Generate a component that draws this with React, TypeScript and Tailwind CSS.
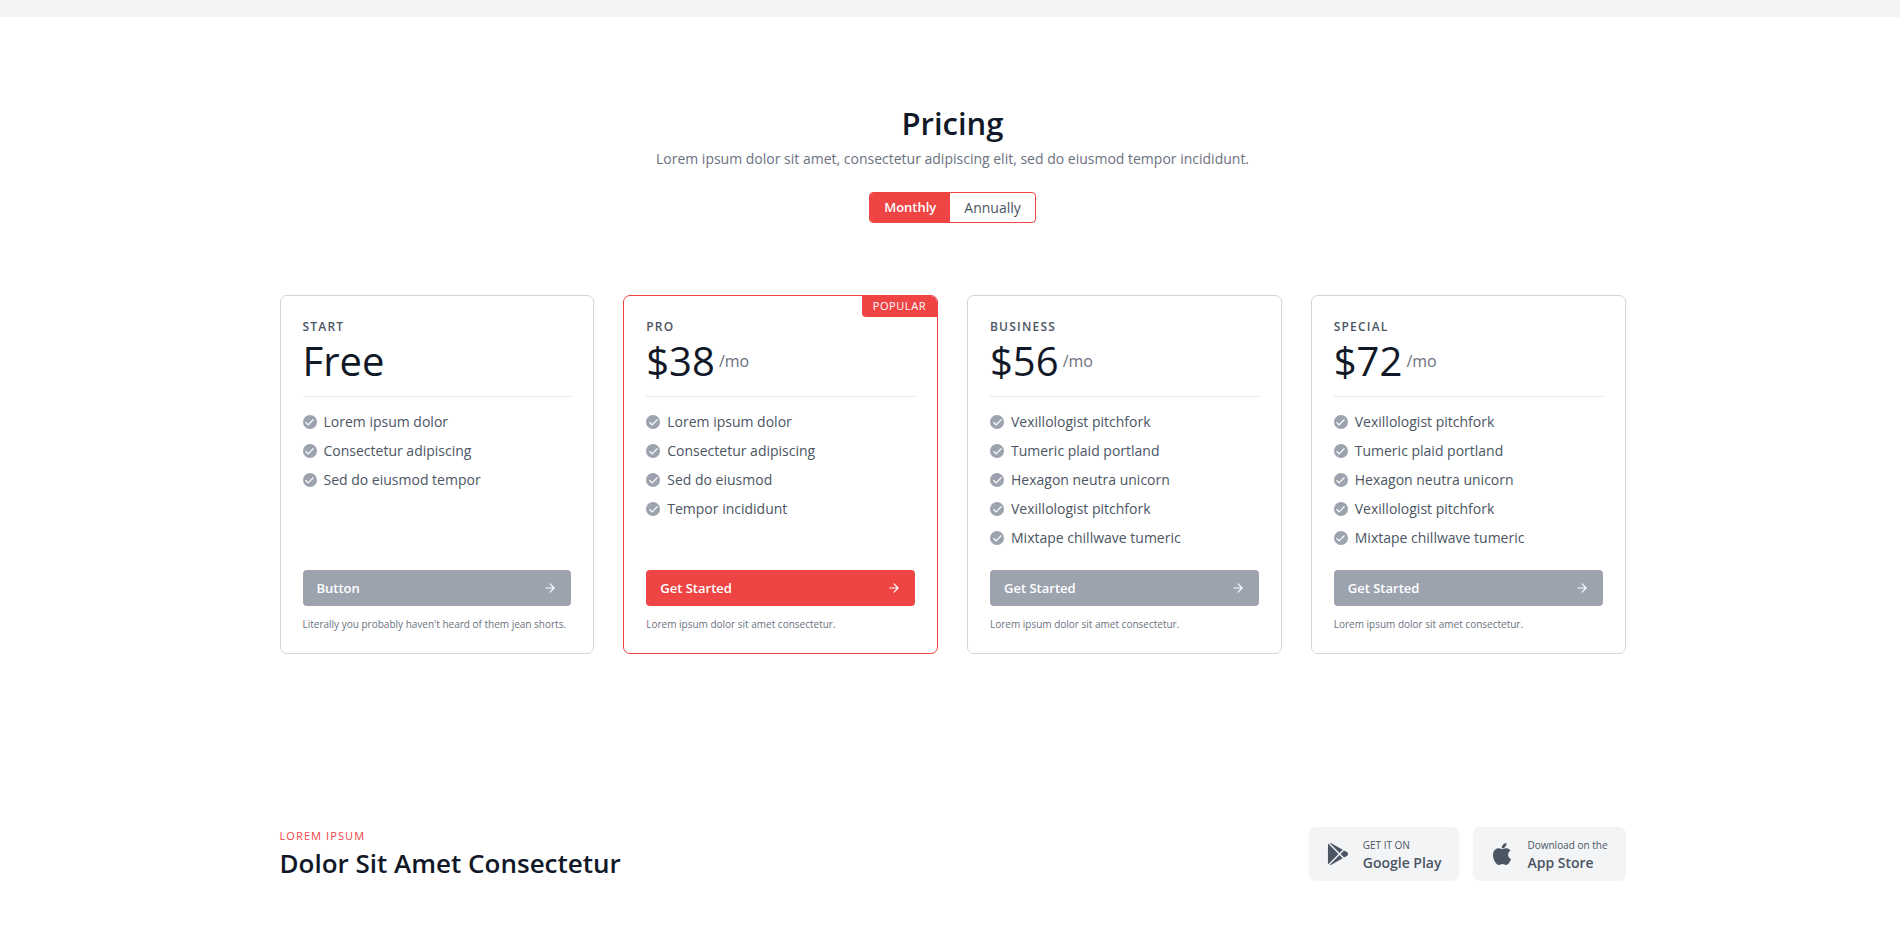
import { useState } from "react";
import { clsx } from "clsx";

interface Plan {
  name: string;
  price: string;
  period?: string;
  features: string[];
  action: string;
  note: string;
  popular?: boolean;
}

const plans: Plan[] = [
  {
    name: "START",
    price: "Free",
    features: ["Lorem ipsum dolor", "Consectetur adipiscing", "Sed do eiusmod tempor"],
    action: "Button",
    note: "Literally you probably haven't heard of them jean shorts.",
  },
  {
    name: "PRO",
    price: "$38",
    period: "/mo",
    features: ["Lorem ipsum dolor", "Consectetur adipiscing", "Sed do eiusmod", "Tempor incididunt"],
    action: "Get Started",
    note: "Lorem ipsum dolor sit amet consectetur.",
    popular: true,
  },
  {
    name: "BUSINESS",
    price: "$56",
    period: "/mo",
    features: [
      "Vexillologist pitchfork",
      "Tumeric plaid portland",
      "Hexagon neutra unicorn",
      "Vexillologist pitchfork",
      "Mixtape chillwave tumeric",
    ],
    action: "Get Started",
    note: "Lorem ipsum dolor sit amet consectetur.",
  },
  {
    name: "SPECIAL",
    price: "$72",
    period: "/mo",
    features: [
      "Vexillologist pitchfork",
      "Tumeric plaid portland",
      "Hexagon neutra unicorn",
      "Vexillologist pitchfork",
      "Mixtape chillwave tumeric",
    ],
    action: "Get Started",
    note: "Lorem ipsum dolor sit amet consectetur.",
  },
];

const CheckBadge = () => (
  <span className="mr-[7px] inline-flex size-[14px] shrink-0 items-center justify-center rounded-full bg-[#9ca3af] text-white">
    <svg
      className="size-[11px]"
      fill="none"
      stroke="currentColor"
      strokeLinecap="round"
      strokeLinejoin="round"
      strokeWidth="2.5"
      viewBox="0 0 24 24"
      aria-hidden="true"
    >
      <path d="M20 6L9 17l-5-5" />
    </svg>
  </span>
);

const ArrowIcon = () => (
  <svg
    className="ml-auto size-[14px]"
    fill="none"
    stroke="currentColor"
    strokeLinecap="round"
    strokeLinejoin="round"
    strokeWidth="2"
    viewBox="0 0 24 24"
    aria-hidden="true"
  >
    <path d="M5 12h14M12 5l7 7-7 7" />
  </svg>
);

const PlayIcon = () => (
  <svg className="size-[22px]" fill="currentColor" viewBox="0 0 512 512" aria-hidden="true">
    <path d="M99.617 8.057a50.191 50.191 0 00-38.815-6.713l230.932 230.933 74.846-74.846L99.617 8.057zM32.139 20.116c-6.441 8.563-10.148 19.077-10.148 30.199v411.358c0 11.123 3.708 21.636 10.148 30.199l235.877-235.877L32.139 20.116zM464.261 212.087l-67.266-37.637-81.544 81.544 81.548 81.548 67.273-37.64c16.117-9.03 25.738-25.442 25.738-43.908s-9.621-34.877-25.749-43.907zM291.733 279.711L60.815 510.629c3.786.891 7.639 1.371 11.492 1.371a50.275 50.275 0 0027.31-8.07l266.965-149.372-74.849-74.847z" />
  </svg>
);

const AppleIcon = () => (
  <svg className="size-[22px]" fill="currentColor" viewBox="0 0 305 305" aria-hidden="true">
    <path d="M40.74 112.12c-25.79 44.74-9.4 112.65 19.12 153.82C74.09 286.52 88.5 305 108.24 305c.37 0 .74 0 1.13-.02 9.27-.37 15.97-3.23 22.45-5.99 7.27-3.1 14.8-6.3 26.6-6.3 11.22 0 18.39 3.1 25.31 6.1 6.83 2.95 13.87 6 24.26 5.81 22.23-.41 35.88-20.35 47.92-37.94a168.18 168.18 0 0021-43l.09-.28a2.5 2.5 0 00-1.33-3.06l-.18-.08c-3.92-1.6-38.26-16.84-38.62-58.36-.34-33.74 25.76-51.6 31-54.84l.24-.15a2.5 2.5 0 00.7-3.51c-18-26.37-45.62-30.34-56.73-30.82a50.04 50.04 0 00-4.95-.24c-13.06 0-25.56 4.93-35.61 8.9-6.94 2.73-12.93 5.09-17.06 5.09-4.64 0-10.67-2.4-17.65-5.16-9.33-3.7-19.9-7.9-31.1-7.9l-.79.01c-26.03.38-50.62 15.27-64.18 38.86z" />
    <path d="M212.1 0c-15.76.64-34.67 10.35-45.97 23.58-9.6 11.13-19 29.68-16.52 48.38a2.5 2.5 0 002.29 2.17c1.06.08 2.15.12 3.23.12 15.41 0 32.04-8.52 43.4-22.25 11.94-14.5 17.99-33.1 16.16-49.77A2.52 2.52 0 00212.1 0z" />
  </svg>
);

const PlanCard = ({ plan }: { plan: Plan }) => {
  return (
    <div
      className={clsx(
        "relative flex flex-col overflow-hidden rounded-[7px] border p-[22px]",
        plan.popular ? "border-[#ef4444]" : "border-[#d1d5db]",
      )}
    >
      {plan.popular && (
        <span className="absolute top-0 right-0 rounded-bl bg-[#ef4444] px-[11px] pt-[2px] pb-1 text-[11px] leading-[15px] tracking-wider text-white">
          POPULAR
        </span>
      )}
      <h2 className="mb-[3px] text-[12px] leading-[18px] font-semibold tracking-widest text-[#4b5563]">{plan.name}</h2>
      <div className="mb-[14px] flex items-center border-b border-[#e5e7eb] pb-[14px] text-[#111827]">
        <span className="text-[40px] leading-[43px]">{plan.price}</span>
        {plan.period && <span className="ml-1 text-[16px] leading-6 text-[#6b7280]">{plan.period}</span>}
      </div>
      <ul className="mb-[14px] text-[14px] leading-[22px] text-[#4b5563]">
        {plan.features.map((feature, idx) => (
          <li key={idx} className="mb-[7px] flex items-center">
            <CheckBadge />
            {feature}
          </li>
        ))}
      </ul>
      <button
        type="button"
        className={clsx(
          "mt-auto flex w-full items-center rounded px-[14px] py-[7px] text-[13px] leading-[22px] font-semibold text-white",
          plan.popular ? "bg-[#ef4444]" : "bg-[#9ca3af]",
        )}
      >
        {plan.action}
        <ArrowIcon />
      </button>
      <p className="mt-[11px] text-[10px] leading-[14px] whitespace-nowrap text-[#6b7280]">{plan.note}</p>
    </div>
  );
};

const Pricing = () => {
  const [billing, setBilling] = useState("Monthly");

  return (
    <section className="mx-auto max-w-[1382px] px-[18px] py-[86px]">
      <div className="mb-[72px] flex flex-col items-center text-center">
        <h1 className="mb-1 text-[31px] leading-10 font-semibold text-[#111827]">Pricing</h1>
        <p className="text-[14px] leading-[23px] text-[#6b7280]">
          Lorem ipsum dolor sit amet, consectetur adipiscing elit, sed do eiusmod tempor incididunt.
        </p>
        <div className="mt-[22px] flex overflow-hidden rounded border border-[#ef4444]">
          {["Monthly", "Annually"].map((option) => (
            <button
              key={option}
              type="button"
              aria-pressed={billing === option}
              onClick={() => setBilling(option)}
              className={clsx(
                "px-[14px] py-1 leading-[21px]",
                billing === option ? "bg-[#ef4444] text-[13px] font-semibold text-white" : "text-[14px] text-[#4b5563]",
              )}
            >
              {option}
            </button>
          ))}
        </div>
      </div>
      <div className="grid gap-[29px] md:grid-cols-2 xl:grid-cols-4">
        {plans.map((plan) => (
          <PlanCard key={plan.name} plan={plan} />
        ))}
      </div>
    </section>
  );
};

const Download = () => {
  return (
    <section className="mx-auto flex max-w-[1382px] flex-wrap items-center justify-between px-[18px] pt-[87px] pb-14">
      <div>
        <h2 className="mb-1 text-[11px] leading-[14px] tracking-widest text-[#ef4444]">LOREM IPSUM</h2>
        <h1 className="text-[26px] leading-8 font-semibold text-[#111827]">Dolor Sit Amet Consectetur</h1>
      </div>
      <div className="flex gap-[14px] text-[#4b5563]">
        <a href="#google-play" className="flex items-center rounded-[7px] bg-[#f3f4f6] px-[18px] py-[11px]">
          <PlayIcon />
          <span className="ml-[14px] flex flex-col">
            <span className="mb-1 text-[10px] leading-[14px]">GET IT ON</span>
            <span className="text-[14px] leading-[14px] font-semibold">Google Play</span>
          </span>
        </a>
        <a href="#app-store" className="flex items-center rounded-[7px] bg-[#f3f4f6] px-[18px] py-[11px]">
          <AppleIcon />
          <span className="ml-[14px] flex flex-col">
            <span className="mb-1 text-[10px] leading-[14px]">Download on the</span>
            <span className="text-[14px] leading-[14px] font-semibold">App Store</span>
          </span>
        </a>
      </div>
    </section>
  );
};

const App = () => {
  return (
    <div className="bg-white font-['Open_Sans','Noto_Sans',sans-serif]">
      <div className="h-[17px] bg-[#f3f4f6]" />
      <main className="pl-[5px]">
        <Pricing />
        <Download />
      </main>
    </div>
  );
};

export default App;
